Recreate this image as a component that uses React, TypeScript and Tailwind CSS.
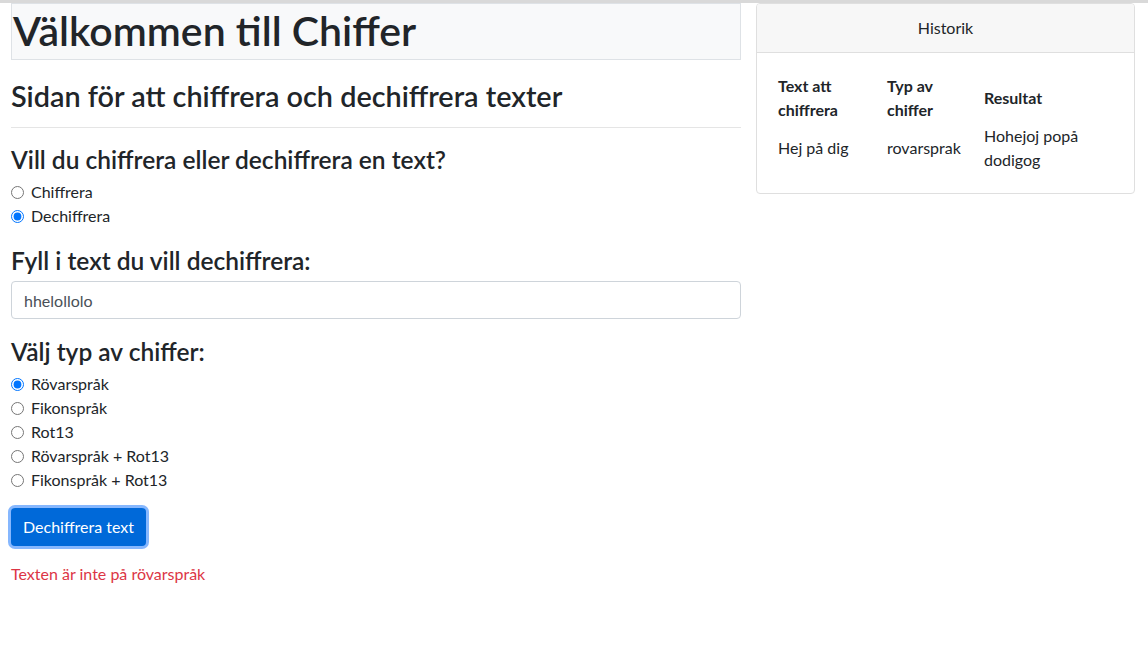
export default function App() {
  return (
    <div className="min-h-screen bg-white border-t-[3px] border-[#d9d9d9] text-[#212529]" style={{ fontFamily: 'Lato, "Noto Sans", sans-serif' }}>
      <div className="flex items-start">
        {/* Left column */}
        <div className="ml-[11px] w-[730px]">
          <h1 className="h-[57px] bg-[#f8f9fa] border border-[#dee2e6] text-[41px] leading-[47px] font-semibold pl-[1px] pt-[3px]">
            Välkommen till Chiffer
          </h1>
          <h3 className="mt-[20px] text-[28.8px] leading-[33px] font-semibold">
            Sidan för att chiffrera och dechiffrera texter
          </h3>
          <hr className="mt-[14px] border-[#e5e5e5]" />

          <h4 className="mt-[18px] text-[24.5px] leading-[28px] font-semibold">
            Vill du chiffrera eller dechiffrera en text?
          </h4>
          <div className="mt-[6px]">
            <Radio name="mode" label="Chiffrera" />
            <Radio name="mode" label="Dechiffrera" checked />
          </div>

          <h4 className="mt-[19px] text-[24.5px] leading-[28px] font-semibold">
            Fyll i text du vill dechiffrera:
          </h4>
          <input
            type="text"
            defaultValue="hhelollolo"
            className="mt-[6px] w-full h-[38px] px-[12px] border border-[#ced4da] rounded-[4px] text-[16px] text-[#495057] outline-none"
          />

          <h4 className="mt-[19px] text-[24.5px] leading-[28px] font-semibold">
            Välj typ av chiffer:
          </h4>
          <div className="mt-[6px]">
            <Radio name="type" label="Rövarspråk" checked />
            <Radio name="type" label="Fikonspråk" />
            <Radio name="type" label="Rot13" />
            <Radio name="type" label="Rövarspråk + Rot13" />
            <Radio name="type" label="Fikonspråk + Rot13" />
          </div>

          <button className="mt-[16px] h-[38px] px-[12px] bg-[#0069d9] text-white text-[16px] rounded-[4px] ring-[3px] ring-[#86b7fe]">
            Dechiffrera text
          </button>

          <p className="mt-[16px] text-[16px] leading-[24px] text-[#dc3545]">
            Texten är inte på rövarspråk
          </p>
        </div>

        {/* Right column */}
        <div className="ml-[15px] w-[379px] border border-[#dfdfdf] rounded-[4px] overflow-hidden">
          <div className="h-[49px] bg-[#f7f7f7] border-b border-[#dfdfdf] flex items-center justify-center text-[16px]">
            Historik
          </div>
          <div className="px-[17px] pt-[18px] pb-[21px]">
            <table className="text-[16px] leading-[24px]">
              <thead>
                <tr className="align-middle">
                  <th className="w-[109px] text-left font-bold px-[4px] pt-[3px] pb-0">Text att<br />chiffrera</th>
                  <th className="w-[97px] text-left font-bold px-[4px] pt-[3px] pb-0">Typ av<br />chiffer</th>
                  <th className="w-[135px] text-left font-bold px-[4px] pt-[3px] pb-0">Resultat</th>
                </tr>
              </thead>
              <tbody>
                <tr className="align-middle">
                  <td className="px-[4px] pt-[2px] pb-0">Hej på dig</td>
                  <td className="px-[4px] pt-[2px] pb-0">rovarsprak</td>
                  <td className="px-[4px] pt-[2px] pb-0">Hohejoj popå<br />dodigog</td>
                </tr>
              </tbody>
            </table>
          </div>
        </div>
      </div>
    </div>
  );
}

function Radio({ name, label, checked }: { name: string; label: string; checked?: boolean }) {
  return (
    <label className="flex items-center h-[24px] text-[16px]">
      <input type="radio" name={name} defaultChecked={checked} className="w-[13px] h-[13px] m-0 accent-[#0075ff]" />
      <span className="ml-[7px]">{label}</span>
    </label>
  );
}
